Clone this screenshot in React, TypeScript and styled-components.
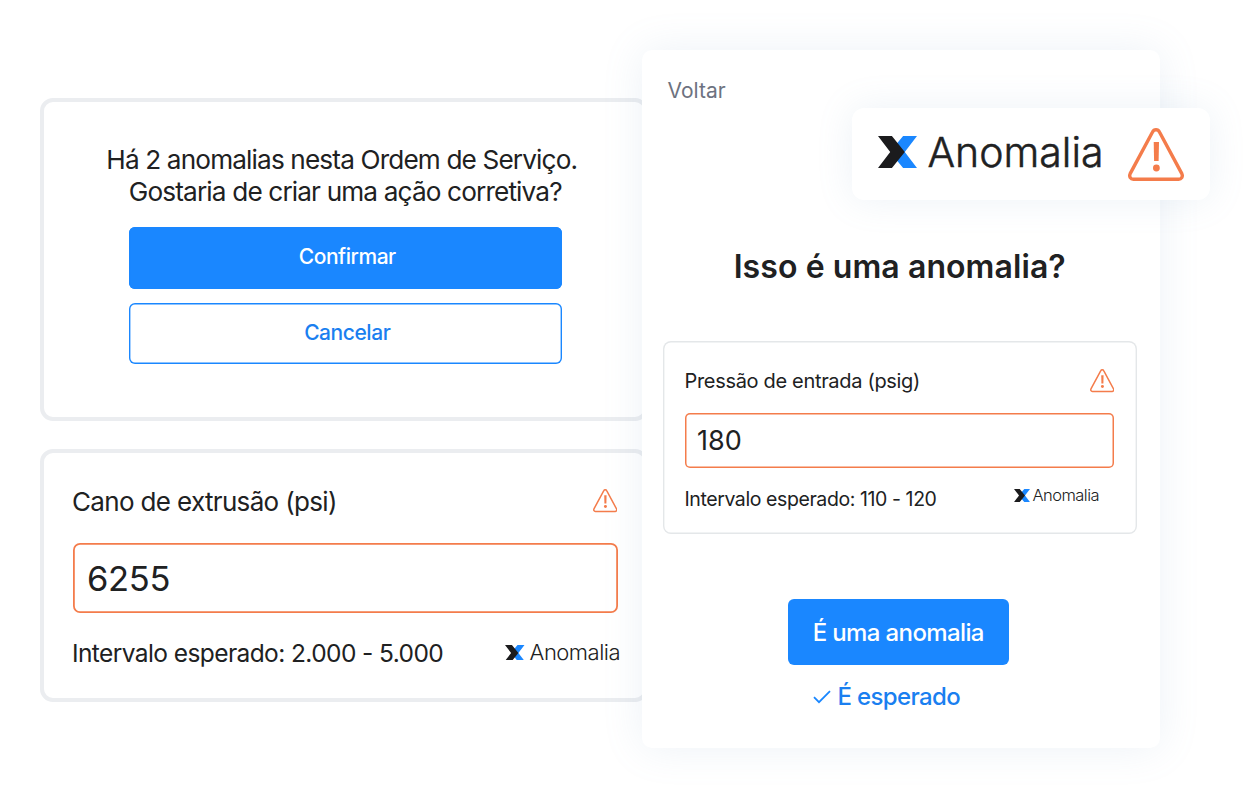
import React from 'react'
import styled, {createGlobalStyle} from 'styled-components'

const GlobalStyle = createGlobalStyle`
	* {
		box-sizing: border-box;
	}
	body {
		margin: 0;
		background-color: #ffffff;
		color: #202122;
		font-family: Inter, 'Liberation Sans', sans-serif;
	}
	button, input {
		font-family: inherit;
		color: inherit;
	}
`

/****************************************************** icons ***************************************************/
function LogoMark({width}: {width: number}) {
	return (
		<svg width={width} height={width * 94 / 115} viewBox='0 0 115 94'>
			<path d='M74 0H115L79 47L115 94H74L54 70L74 47L54 24Z' fill='#1a87ff' />
			<path d='M0 0H41L79 47L41 94H0L36 47Z' fill='#1b1b1d' />
		</svg>
	)
}

function WarningIcon({width}: {width: number}) {
	return (
		<svg width={width} height={width * 53 / 56} viewBox='0 0 56 53' fill='none'>
			<path
				d='M24.4 4.2C26 1 30 1 31.6 4.2L53.8 45.6C55.2 48.6 53.4 51.2 50.6 51.2H5.4C2.6 51.2 0.8 48.6 2.2 45.6Z'
				stroke='#f47c4b'
				strokeWidth='3.4'
			/>
			<path d='M25.7 14H31L30.6 33H26.1Z' fill='#f47c4b' />
			<circle cx='28.4' cy='40' r='3.4' fill='#f47c4b' />
		</svg>
	)
}

function CheckIcon() {
	return (
		<svg width='18' height='14' viewBox='0 0 18 14' fill='none'>
			<path d='M1 7.2L6 12.2L17 1.2' stroke='#1a87ff' strokeWidth='1.8' />
		</svg>
	)
}

/****************************************************** contents ***************************************************/
function App() {
	return (
		<>
			<GlobalStyle />
			<Stage>
				<LeftColumn>
					<ConfirmCard>
						<Question>
							<Text size={26.2} line={32} spacing={-0.86}>Há 2 anomalias nesta Ordem de Serviço.</Text>
							<SecondLine>
								<Text size={26.2} line={32} spacing={-0.86}>Gostaria de criar uma ação corretiva?</Text>
							</SecondLine>
						</Question>
						<ActionButton $primary>Confirmar</ActionButton>
						<ActionButton>Cancelar</ActionButton>
					</ConfirmCard>
					<ReadingCard>
						<Row>
							<Text size={26} line={32} spacing={-0.66}>Cano de extrusão (psi)</Text>
							<Alert $right={1} $bottom={1}>
								<WarningIcon width={24.5} />
							</Alert>
						</Row>
						<LargeInput defaultValue='6255' />
						<Row>
							<Text size={24.5} line={30} spacing={-0.59}>Intervalo esperado: 2.000 - 5.000</Text>
							<Brand $gap={5} $right={-2} $bottom={1}>
								<LogoMark width={19.5} />
								<Text size={22} line={29} weight={300} spacing={-0.5}>Anomalia</Text>
							</Brand>
						</Row>
					</ReadingCard>
				</LeftColumn>
				<Panel>
					<Back>Voltar</Back>
					<Title>Isso é uma anomalia?</Title>
					<PressureBox>
						<Row>
							<Text size={20} line={24} spacing={-0.32}>Pressão de entrada (psig)</Text>
							<WarningIcon width={24.5} />
						</Row>
						<SmallInput defaultValue='180' />
						<Row>
							<Text size={19.5} line={24} spacing={-0.41}>Intervalo esperado: 110 - 120</Text>
							<Brand $gap={3} $right={15} $bottom={8}>
								<LogoMark width={16} />
								<Text size={16.5} line={17} weight={300} spacing={-0.55}>Anomalia</Text>
							</Brand>
						</Row>
					</PressureBox>
					<AnomalyButton>É uma anomalia</AnomalyButton>
					<ExpectedLink>
						<CheckIcon />
						É esperado
					</ExpectedLink>
					<Badge>
						<BadgeBrand>
							<LogoMark width={39} />
							<BadgeText>Anomalia</BadgeText>
						</BadgeBrand>
						<WarningIcon width={56} />
					</Badge>
				</Panel>
			</Stage>
		</>
	)
}

interface TextProps {
	size: number
	line: number
	weight?: number
	spacing?: number
	children: React.ReactNode
}

function Text({size, line, weight = 400, spacing = 0, children}: TextProps) {
	return <TextLine $size={size} $line={line} $weight={weight} $spacing={spacing}>{children}</TextLine>
}

/****************************************************** styles ***************************************************/
const TextLine = styled.span<{$size: number, $line: number, $weight: number, $spacing: number}>`
	display: block;
	font-size: ${p => p.$size}px;
	line-height: ${p => p.$line}px;
	font-weight: ${p => p.$weight};
	letter-spacing: ${p => p.$spacing}px;
	white-space: nowrap;
`

const Stage = styled.main`
	display: flex;
	align-items: flex-start;
	width: 1248px;
	height: 798px;
	padding: 50px 0 0 40px;
	overflow: hidden;
`

const LeftColumn = styled.div`
	display: flex;
	flex-direction: column;
	flex: none;
	gap: 28.5px;
	width: 608px;
	margin: 48px -6px 0 0;
`

const Card = styled.section`
	display: flex;
	flex-direction: column;
	border: 4px solid #ebedf0;
	border-radius: 13px;
`

const ConfirmCard = styled(Card)`
	height: 322.5px;
	padding: 42px 82px 0 84.5px;
`

const Question = styled.div`
	display: flex;
	flex-direction: column;
	align-items: center;
	margin: 0 7px 19.4px 0;
`

const SecondLine = styled.div`
	padding-left: 7px;
`

const ActionButton = styled.button<{$primary?: boolean}>`
	flex: none;
	height: 61.5px;
	margin-bottom: 13.8px;
	padding: 0 0 ${p => p.$primary ? 3 : 2}px 4px;
	border: 0;
	border-radius: 6px;
	box-shadow: inset 0 0 0 1.4px #1a87ff;
	background-color: ${p => p.$primary ? '#1a87ff' : '#ffffff'};
	color: ${p => p.$primary ? '#ffffff' : '#1a7ff0'};
	font-size: 21px;
	font-weight: 500;
	letter-spacing: -0.45px;
`

const ReadingCard = styled(Card)`
	height: 252.5px;
	padding: 32.5px 26px 0 28.5px;
`

const Row = styled.div`
	display: flex;
	align-items: center;
	justify-content: space-between;
	margin-left: -0.5px;
`

const Alert = styled.div<{$right: number, $bottom: number}>`
	display: flex;
	margin: 0 ${p => p.$right}px ${p => p.$bottom}px 0;
`

const FieldInput = styled.input`
	display: block;
	flex: none;
	width: 100%;
	border: 0;
	background-color: #ffffff;
	outline: none;
`

const LargeInput = styled(FieldInput)`
	height: 70px;
	margin: 25.5px 0 25px;
	padding: 0 14.5px;
	border-radius: 7px;
	box-shadow: inset 0 0 0 1.8px #f47c4b;
	font-size: 34.5px;
	letter-spacing: -0.3px;
`

const SmallInput = styled(FieldInput)`
	height: 55px;
	margin: 20px 0 19px;
	padding: 0 12px;
	border-radius: 5px;
	box-shadow: inset 0 0 0 1.5px #f47c4b;
	font-size: 27px;
`

const Brand = styled.div<{$gap: number, $right: number, $bottom?: number}>`
	display: flex;
	align-items: center;
	gap: ${p => p.$gap}px;
	margin-right: ${p => p.$right}px;
	margin-bottom: ${p => p.$bottom || 0}px;
`

const Panel = styled.section`
	position: relative;
	display: flex;
	flex-direction: column;
	align-items: center;
	flex: none;
	width: 518px;
	height: 698px;
	padding: 29px 23.5px 0 21px;
	border-radius: 10px;
	background-color: #ffffff;
	box-shadow: 0 0 40px rgba(125, 160, 195, 0.14);
`

const Back = styled.div`
	align-self: flex-start;
	margin-left: 4.5px;
	color: #6d7280;
	font-size: 21px;
	line-height: 24px;
`

const Title = styled.h1`
	margin: 144px 0 54.3px;
	font-size: 32px;
	font-weight: 600;
	letter-spacing: 0.08px;
	line-height: 40px;
	white-space: nowrap;
`

const PressureBox = styled.div`
	flex: none;
	width: 100%;
	height: 192.5px;
	padding: 27.7px 22.5px 0 22px;
	border-radius: 8px;
	box-shadow: inset 0 0 0 1.4px #e4e7e9;
`

const AnomalyButton = styled.button`
	flex: none;
	width: 221px;
	height: 66px;
	margin: 65.2px 2px 17px 0;
	padding: 1px 1px 0 0;
	border: 0;
	border-radius: 6px;
	background-color: #1a87ff;
	color: #ffffff;
	font-size: 24px;
	font-weight: 500;
	letter-spacing: -0.62px;
`

const ExpectedLink = styled.div`
	display: flex;
	align-items: center;
	gap: 7px;
	margin-right: 27px;
	color: #1a7ff0;
	font-size: 24px;
	font-weight: 500;
	letter-spacing: -0.65px;
	line-height: 30px;
`

/* floats over the top right corner of the panel */
const Badge = styled.div`
	position: absolute;
	top: 58px;
	right: -50px;
	display: flex;
	align-items: center;
	justify-content: space-between;
	width: 358px;
	height: 92px;
	padding: 0 26px;
	border-radius: 12px;
	background-color: #ffffff;
	box-shadow: 0 0 36px rgba(125, 160, 195, 0.14);
`

const BadgeBrand = styled.div`
	display: flex;
	align-items: center;
	gap: 10.5px;
	margin-bottom: 4px;
`

const BadgeText = styled.span`
	font-size: 41px;
	font-weight: 300;
	line-height: 50px;
	-webkit-text-stroke: 0.5px #202122;
`

export default App
